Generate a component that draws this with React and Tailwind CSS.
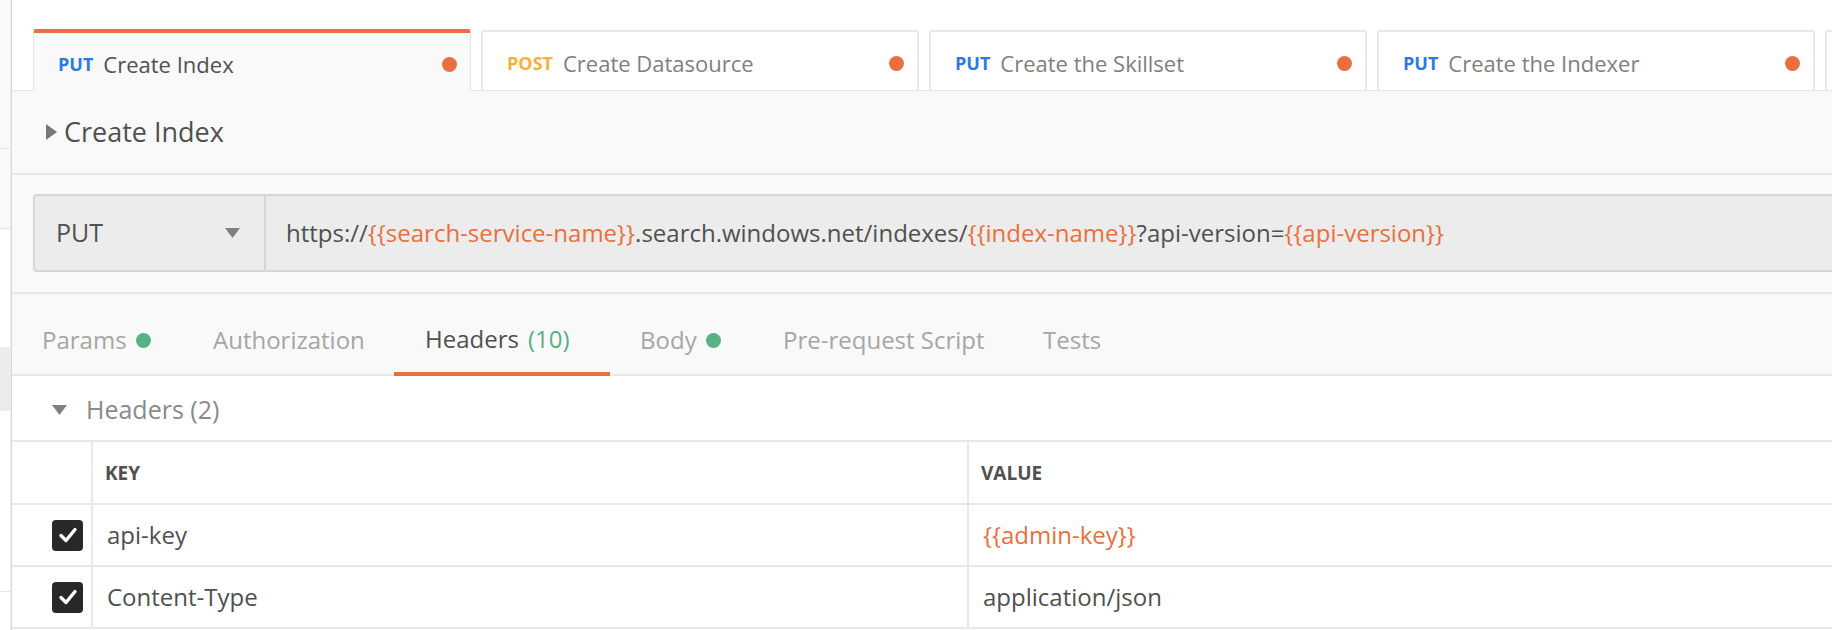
import React from 'react';

const ORANGE = 'text-[#e8703e]';

const tabs = [
  { method: 'PUT', title: 'Create Index', active: true },
  { method: 'POST', title: 'Create Datasource' },
  { method: 'PUT', title: 'Create the Skillset' },
  { method: 'PUT', title: 'Create the Indexer' },
];

const Var = ({ children }) => <span className={ORANGE}>{`{{${children}}}`}</span>;

const Check = () => (
  <div className="w-[31px] h-[31px] rounded-[4px] bg-[#282828] flex items-center justify-center">
    <svg width="22" height="22" viewBox="0 0 22 22">
      <path d="M4 11.5 L9 16.5 L18 5.5" stroke="#fff" strokeWidth="3.4" fill="none" strokeLinecap="round" strokeLinejoin="round" />
    </svg>
  </div>
);

const Dot = ({ cls }) => <span className={`w-[15px] h-[15px] rounded-full ${cls}`} />;

export default function App() {
  return (
    <div className="w-[1832px] h-[630px] overflow-hidden flex bg-white text-[#505050]" style={{ fontFamily: '"Open Sans", sans-serif' }}>
      {/* sidebar sliver */}
      <div className="w-[12px] shrink-0 flex border-r border-[#d8d8d8]">
        <div className="w-[10px] flex flex-col">
          <div className="h-[149px] bg-[#f9f9f9] border-b border-[#e6e6e6]" />
          <div className="h-[80px] bg-[#f9f9f9] border-b border-[#e6e6e6]" />
          <div className="h-[118px] bg-white" />
          <div className="h-[64px] bg-[#ececec]" />
          <div className="h-[181px] bg-white border-b border-[#e6e6e6]" />
          <div className="flex-1 bg-white" />
        </div>
        <div className="w-[1px] bg-[#ececec]" />
      </div>

      <div className="flex-1 flex flex-col min-w-0">
        {/* request tabs */}
        <div className="h-[91px] shrink-0 bg-white flex items-end gap-[10px] pl-[21px] border-b border-[#e6e6e6]">
          {tabs.map((t, i) =>
            t.active ? (
              <div key={i} className="w-[438px] h-[62px] -mb-px shrink-0 bg-[#f9f9f9] rounded-t-[3px] border-t-4 border-[#e8703e] border-x border-x-[#e6e6e6] flex items-center pt-[4px] pl-[24px] pr-[13px]">
                <span className="text-[18px] font-bold text-[#2c7be5] mr-[10px]">{t.method}</span>
                <span className="text-[22px] text-[#505050]">{t.title}</span>
                <Dot cls="ml-auto bg-[#e8703e]" />
              </div>
            ) : (
              <div key={i} className="w-[438px] h-[60px] shrink-0 bg-white rounded-t-[3px] border-t-2 border-x-2 border-[#e8e8e8] flex items-center pt-[4px] pl-[24px] pr-[13px]">
                <span className={`text-[18px] font-bold mr-[10px] ${t.method === 'POST' ? 'text-[#f5b13d]' : 'text-[#2c7be5]'}`}>{t.method}</span>
                <span className="text-[22px] text-[#808080]">{t.title}</span>
                <Dot cls="ml-auto bg-[#e8703e]" />
              </div>
            )
          )}
          <div className="w-[438px] h-[60px] shrink-0 bg-white rounded-t-[3px] border-t-2 border-x-2 border-[#e8e8e8]" />
        </div>

        {/* request name */}
        <div className="h-[84px] shrink-0 bg-[#f9f9f9] border-b-2 border-[#e8e8e8] flex items-center pl-[34px]">
          <svg width="11" height="16" viewBox="0 0 11 16" className="mr-[7px]">
            <path d="M0 0 L11 8 L0 16 Z" fill="#777" />
          </svg>
          <span className="text-[27px] text-[#505050]">Create Index</span>
        </div>

        {/* url bar */}
        <div className="h-[119px] shrink-0 bg-[#f9f9f9] border-b-2 border-[#e8e8e8] pl-[21px] pt-[19px]">
          <div className="h-[78px] flex bg-[#ececec] border-2 border-r-0 border-[#d6d6d6] rounded-l-[4px]">
            <div className="w-[231px] shrink-0 flex items-center pl-[21px] pr-[24px] border-r-2 border-[#d6d6d6]">
              <span className="text-[25px] text-[#505050]">PUT</span>
              <svg width="15" height="10" viewBox="0 0 15 10" className="ml-auto">
                <path d="M0 0 L15 0 L7.5 10 Z" fill="#808080" />
              </svg>
            </div>
            <div className="flex items-center pl-[20px] text-[24px] text-[#505050] whitespace-nowrap">
              https://<Var>search-service-name</Var>.search.windows.net/indexes/<Var>index-name</Var>?api-version=<Var>api-version</Var>
            </div>
          </div>
        </div>

        {/* sub tabs */}
        <div className="h-[82px] shrink-0 bg-[#f9f9f9] border-b-2 border-[#e8e8e8] flex items-stretch pl-[30px] text-[24px] text-[#a6a6a6]">
          <div className="w-[171px] shrink-0 flex items-center pt-[12px]">
            Params<Dot cls="ml-[9px] bg-[#55b286]" />
          </div>
          <div className="w-[181px] shrink-0 flex items-center pt-[12px]">Authorization</div>
          <div className="w-[216px] shrink-0 flex items-center pt-[12px] pl-[31px] border-b-4 border-[#e8703e] -mb-[2px] text-[#505050]">
            Headers<span className="ml-[9px] text-[#55b286]">(10)</span>
          </div>
          <div className="w-[173px] shrink-0 flex items-center pt-[12px] pl-[30px]">
            Body<Dot cls="ml-[9px] bg-[#55b286]" />
          </div>
          <div className="w-[260px] shrink-0 flex items-center pt-[12px]">Pre-request Script</div>
          <div className="flex items-center pt-[12px]">Tests</div>
        </div>

        {/* headers section */}
        <div className="h-[66px] shrink-0 flex items-center pt-[4px] pl-[40px] border-b-2 border-[#e8e8e8]">
          <svg width="15" height="10" viewBox="0 0 15 10" className="mr-[19px]">
            <path d="M0 0 L15 0 L7.5 10 Z" fill="#808080" />
          </svg>
          <span className="text-[25px] text-[#8a8a8a]">Headers (2)</span>
        </div>

        <div className="grid grid-cols-[81px_876px_1fr] text-[24px]">
          <div className="h-[63px] border-b-2 border-r-2 border-[#e8e8e8]" />
          <div className="h-[63px] border-b-2 border-r-2 border-[#e8e8e8] flex items-center pt-[2px] pl-[12px] text-[19px] font-bold text-[#505050]">KEY</div>
          <div className="h-[63px] border-b-2 border-[#e8e8e8] flex items-center pt-[2px] pl-[12px] text-[19px] font-bold text-[#505050]">VALUE</div>

          <div className="h-[62px] border-b-2 border-r-2 border-[#e8e8e8] flex items-center pl-[40px]"><Check /></div>
          <div className="h-[62px] border-b-2 border-r-2 border-[#e8e8e8] flex items-center pl-[14px]">api-key</div>
          <div className="h-[62px] border-b-2 border-[#e8e8e8] flex items-center pl-[14px]"><Var>admin-key</Var></div>

          <div className="h-[62px] border-b-2 border-r-2 border-[#e8e8e8] flex items-center pl-[40px]"><Check /></div>
          <div className="h-[62px] border-b-2 border-r-2 border-[#e8e8e8] flex items-center pl-[14px]">Content-Type</div>
          <div className="h-[62px] border-b-2 border-[#e8e8e8] flex items-center pl-[14px]">application/json</div>
        </div>
      </div>
    </div>
  );
}
